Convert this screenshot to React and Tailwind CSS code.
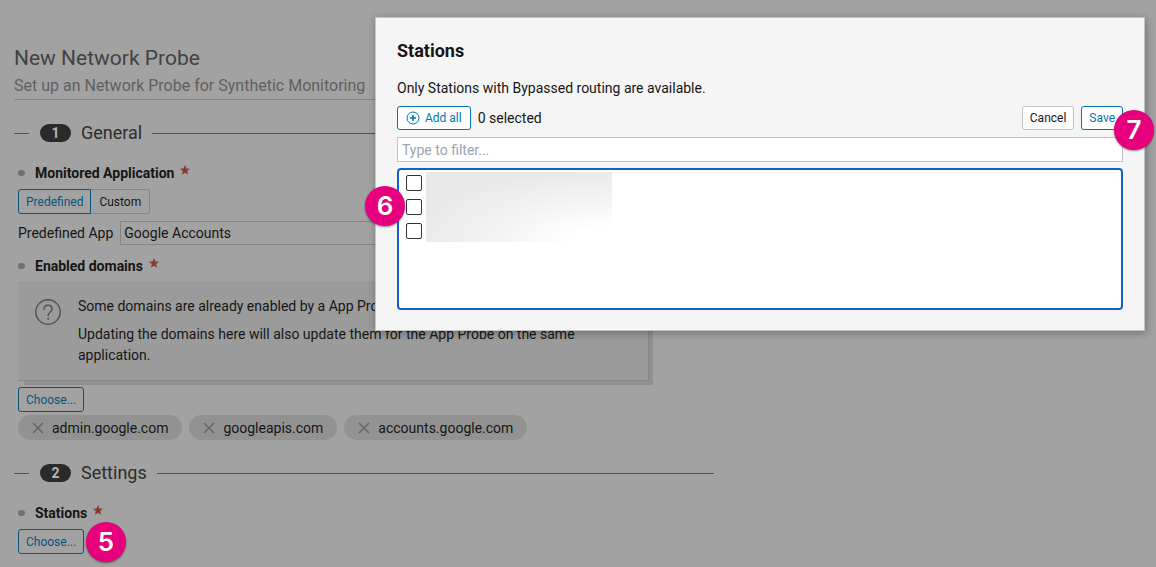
import React, { useState } from "react";

const DOMAINS = ["admin.google.com", "googleapis.com", "accounts.google.com"];

const STATIONS = [
  { id: "station-1", label: "Station 1" },
  { id: "station-2", label: "Station 2" },
  { id: "station-3", label: "Station 3" },
];

const App = () => {
  const [mode, setMode] = useState("Predefined");
  const [domains, setDomains] = useState(DOMAINS);

  const removeDomain = (domain) => setDomains((list) => list.filter((d) => d !== domain));

  return (
    <div className="relative min-h-screen overflow-hidden bg-[#a2a2a2] px-3.5 pt-11 pb-3 font-['Roboto',sans-serif] text-sm text-[#161616]">
      <main className="max-w-[700px]">
        <header className="border-b border-[#858585] pb-px">
          <h1 className="text-[21px] leading-7 text-[#424242]">New Network Probe</h1>
          <p className="mt-0.5 text-base leading-6 text-[#606060]">Set up an Network Probe for Synthetic Monitoring</p>
        </header>

        <SectionTitle number="1" title="General" />
        <div className="pl-1">
          <FieldLabel text="Monitored Application" />
          <div className="mt-1.5 flex">
            {["Predefined", "Custom"].map((name) => (
              <button
                key={name}
                type="button"
                onClick={() => setMode(name)}
                className={
                  mode === name
                    ? "h-[25px] rounded-l-[3px] border border-[#07547d] px-[7px] text-xs text-[#07547d]"
                    : "h-[25px] rounded-r-[3px] border border-l-0 border-[#858585] px-2 text-xs"
                }
              >
                {name}
              </button>
            ))}
          </div>
          <div className="mt-[7px] flex items-center gap-[7px]">
            <label htmlFor="app" className="whitespace-nowrap">
              Predefined App
            </label>
            <select
              id="app"
              className="h-6 flex-1 appearance-none border border-[#858585] bg-transparent px-[3px] text-sm leading-5"
            >
              <option>Google Accounts</option>
            </select>
          </div>

          <div className="-mt-[7px]">
            <FieldLabel text="Enabled domains" />
          </div>
          <div className="mt-[5px] mr-[65px] flex gap-4 border-r border-b border-[#858585] bg-[#9b9b9b] pt-[15px] pr-5 pb-3.5 pl-4 leading-[21px] shadow-[5px_5px_0_-1px_#909090]">
            <svg viewBox="0 0 28 28" className="mt-0.5 size-7 shrink-0" fill="none" stroke="#505050" strokeWidth="1.4">
              <circle cx="14" cy="14" r="12.2" />
              <path d="M10 11.2c0-2.5 1.7-4 4.1-4s4 1.5 4 3.7c0 3.3-4 3.4-4 6.9" strokeLinecap="round" />
              <circle cx="14.1" cy="20.8" r="1" fill="#505050" stroke="none" />
            </svg>
            <div className="space-y-[7px]">
              <p>Some domains are already enabled by a App Probe.</p>
              <p>Updating the domains here will also update them for the App Probe on the same application.</p>
            </div>
          </div>
          <ChooseButton />
          <div className="mt-[3px] flex gap-[7px]">
            {domains.map((domain) => (
              <span key={domain} className="flex h-[25px] items-center gap-2 rounded-full bg-[#929292] pr-3.5 pl-3.5">
                <button type="button" aria-label={`Remove ${domain}`} onClick={() => removeDomain(domain)}>
                  <svg viewBox="0 0 12 12" className="size-3" stroke="#686868" strokeWidth="1.6">
                    <path d="M1 1l10 10M11 1L1 11" />
                  </svg>
                </button>
                {domain}
              </span>
            ))}
          </div>
        </div>

        <SectionTitle number="2" title="Settings" />
        <div className="pl-1">
          <FieldLabel text="Stations" />
          <div className="relative w-fit">
            <ChooseButton />
            <Marker number="5" className="top-0 -mt-[7px] left-[68px]" />
          </div>
        </div>
      </main>

      <StationsDialog />
    </div>
  );
};

const SectionTitle = ({ number, title }) => (
  <div className="mt-[21px] flex items-center">
    <span className="h-px w-[15px] bg-[#505050]" />
    <span className="mr-2.5 ml-[11px] flex h-[18px] w-[31px] items-center justify-center rounded-full bg-[#2a2a2a] text-sm font-bold text-[#b5b5b5]">
      {number}
    </span>
    <h2 className="text-lg leading-6 text-[#2d2d2d]">{title}</h2>
    <span className="ml-2.5 h-px flex-1 bg-[#505050]" />
  </div>
);

const FieldLabel = ({ text }) => (
  <div className="mt-[18px] flex h-5 items-center">
    <span className="mr-2.5 h-1.5 w-[7px] rounded-full bg-[#707070]" />
    <span className="font-bold">{text}</span>
    <svg viewBox="0 0 10 10" className="mb-1.5 ml-1.5 size-2.5" fill="#873a2e">
      <path d="M5 0l1.4 3.4 3.6.3-2.8 2.4.9 3.6L5 7.8 1.9 9.7l.9-3.6L0 3.7l3.6-.3z" />
    </svg>
  </div>
);

const ChooseButton = () => (
  <button
    type="button"
    className="mt-1.5 block h-[25px] rounded-[3px] border border-[#07547d] px-[7px] text-xs text-[#07547d]"
  >
    Choose...
  </button>
);

const Marker = ({ number, className }) => (
  <span
    className={`absolute flex size-10 items-center justify-center rounded-full bg-[#e6007e] font-['Inter',sans-serif] text-[26px] font-semibold text-white shadow-[0_1px_2px_rgba(0,0,0,0.45)] ${className}`}
  >
    {number}
  </span>
);

const StationsDialog = () => {
  const [filter, setFilter] = useState("");
  const [selected, setSelected] = useState([]);

  const toggle = (id) =>
    setSelected((ids) => (ids.includes(id) ? ids.filter((i) => i !== id) : [...ids, id]));

  return (
    <div
      role="dialog"
      aria-labelledby="stations-title"
      className="absolute top-[17px] right-[11px] w-[770px] max-w-full border border-[#c4c4c4] bg-[#f5f5f5] px-[21px] pt-[21px] pb-5 shadow-[1px_2px_8px_rgba(0,0,0,0.3)]"
    >
      <h2 id="stations-title" className="text-lg leading-6 font-bold">
        Stations
      </h2>
      <p className="mt-[15px] leading-5">Only Stations with Bypassed routing are available.</p>
      <div className="mt-2 flex items-center">
        <button
          type="button"
          onClick={() => setSelected(STATIONS.map((s) => s.id))}
          className="flex h-6 items-center gap-[5px] rounded-[3px] border border-[#0077b3] bg-white px-2 text-xs text-[#0077b3]"
        >
          <svg viewBox="0 0 14 14" className="size-3.5" fill="none" stroke="#0077b3">
            <circle cx="7" cy="7" r="6" />
            <path d="M7 4v6M4 7h6" strokeWidth="1.6" />
          </svg>
          Add all
        </button>
        <span className="ml-[7px]">{selected.length} selected</span>
        <button type="button" className="ml-auto h-6 rounded-[3px] border border-[#c4c4c4] bg-white px-[7px] text-xs">
          Cancel
        </button>
        <div className="relative ml-[7px] h-6">
          <button type="button" className="block h-6 rounded-[3px] border border-[#0077b3] bg-white px-[7px] text-xs text-[#0077b3]">
            Save
          </button>
          <Marker number="7" className="top-1 -right-[31px]" />
        </div>
      </div>
      <input
        type="text"
        aria-label="Filter stations"
        placeholder="Type to filter..."
        value={filter}
        onChange={(e) => setFilter(e.target.value)}
        className="mt-[7px] block h-[25px] w-full border border-[#c4c4c4] bg-white px-1 placeholder:text-[#9ca3af]"
      />
      <div className="relative mt-1.5 flex h-[142px] gap-1 rounded-[4px] border-2 border-[#155fc9] bg-white px-[7px] py-0.5">
        <div className="flex flex-col gap-2 pt-[3px]">
          {STATIONS.map((s) => (
            <input
              key={s.id}
              type="checkbox"
              aria-label={s.label}
              checked={selected.includes(s.id)}
              onChange={() => toggle(s.id)}
              className="size-4 appearance-none rounded-[2px] border border-[#333333] bg-white checked:bg-[#155fc9]"
            />
          ))}
        </div>
        <div className="h-[70px] w-[186px] bg-[radial-gradient(ellipse_at_bottom_right,#ffffff_0%,#ffffff_15%,#f3f3f5_45%,#e9e9ea_75%)]" />
        <Marker number="6" className="top-4 -left-[34px]" />
      </div>
    </div>
  );
};

export default App;
